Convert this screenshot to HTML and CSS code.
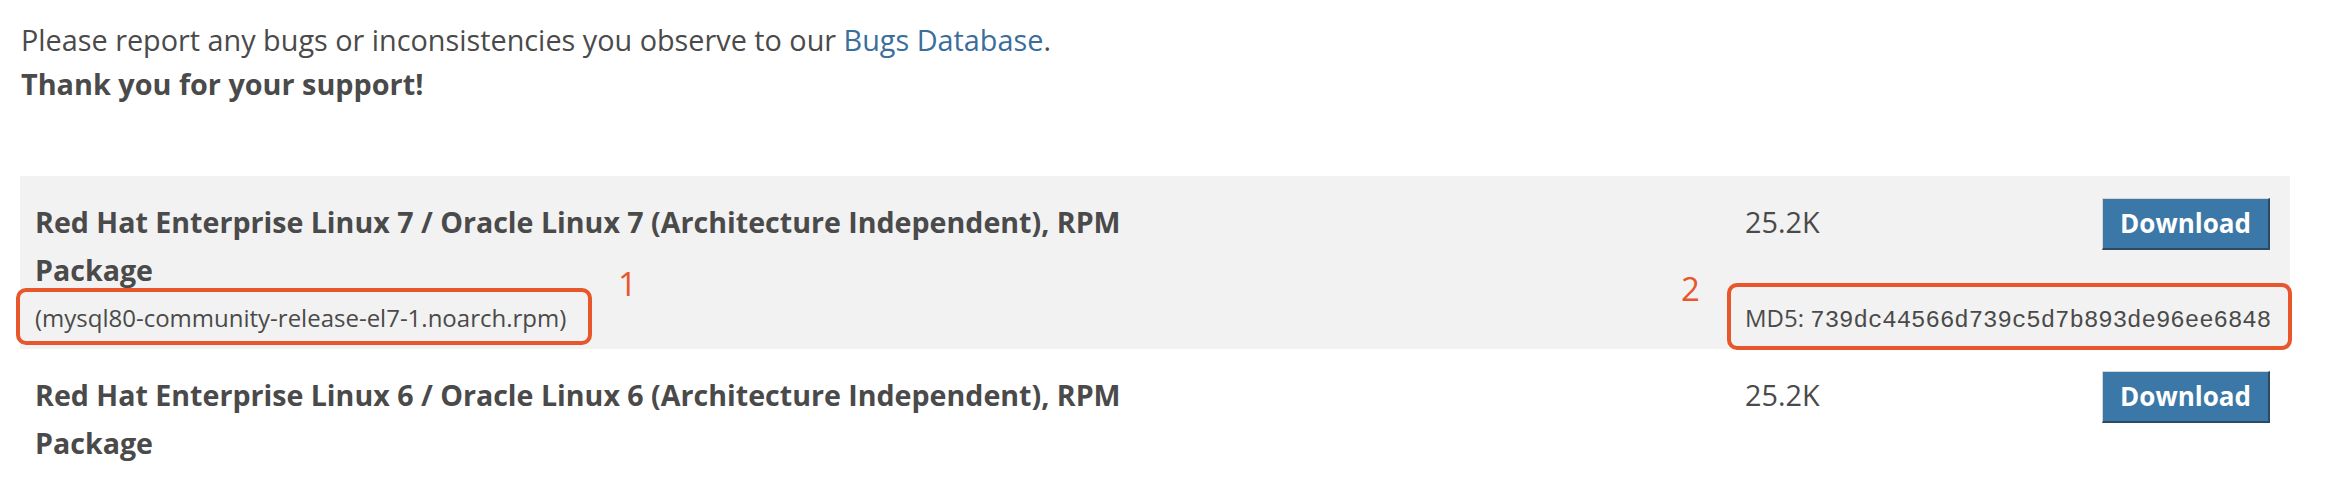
FILE: index.html
```html
<!DOCTYPE html>
<html lang="en">
<head>
<meta charset="utf-8">
<title>Downloads</title>
<link rel="stylesheet" href="styles.css">
</head>
<body>
<div class="page">
  <p class="intro">Please report any bugs or inconsistencies you observe to our <a href="#" class="link">Bugs Database</a>.<br><strong>Thank you for your support!</strong></p>

  <div class="downloads">
    <div class="row alt">
      <div class="title">Red Hat Enterprise Linux 7 / Oracle Linux 7 (Architecture Independent), RPM Package</div>
      <div class="size">25.2K</div>
      <div class="action"><a href="#" class="btn">Download</a></div>
      <div class="file">(mysql80-community-release-el7-1.noarch.rpm)</div>
      <div class="md5">MD5: <code class="hash">739dc44566d739c5d7b893de96ee6848</code></div>
      <span class="mark mark-file"></span>
      <span class="mark-label label-file">1</span>
      <span class="mark mark-md5"></span>
      <span class="mark-label label-md5">2</span>
    </div>
    <div class="row">
      <div class="title">Red Hat Enterprise Linux 6 / Oracle Linux 6 (Architecture Independent), RPM Package</div>
      <div class="size">25.2K</div>
      <div class="action"><a href="#" class="btn">Download</a></div>
      <div class="file">(mysql80-community-release-el6-1.noarch.rpm)</div>
      <div class="md5">MD5: <code class="hash">4d6e9ba3d8f9d0e4c3a1b2f5e6d7c8b9</code></div>
    </div>
  </div>
</div>
</body>
</html>
```

FILE: styles.css
```css
html, body {
  margin: 0;
  padding: 0;
  background: #ffffff;
}

body {
  font-family: "Open Sans", "Liberation Sans", sans-serif;
  color: #4a4a4a;
}

.page {
  width: 2350px;
}

.intro {
  margin: 18px 0 0 21px;
  font-size: 28.8px;
  line-height: 44px;
}

.intro strong {
  font-weight: 700;
}

.link {
  color: #3a6e9b;
  text-decoration: none;
}

.downloads {
  margin: 70px 0 0 20px;
  width: 2270px;
}

.row {
  position: relative;
  display: grid;
  grid-template-columns: 1710px 1fr auto;
  padding: 22px 20px 4px 15px;
}

.row.alt {
  background: #f2f2f2;
}

.title {
  grid-column: 1;
  grid-row: 1;
  max-width: 1150px;
  font-size: 28.6px;
  font-weight: 700;
  line-height: 48px;
}

.size {
  grid-column: 2;
  grid-row: 1;
  font-size: 28.8px;
  line-height: 48px;
}

.action {
  grid-column: 3;
  grid-row: 1;
}

.btn {
  display: inline-block;
  box-sizing: border-box;
  height: 52px;
  padding: 0 17px;
  background: #3b78a8;
  color: #ffffff;
  font-size: 26px;
  font-weight: 700;
  line-height: 48px;
  text-decoration: none;
  border-style: solid;
  border-width: 1px 2px 2px 1px;
  border-color: #d6d6d6 #2c4a62 #2c4a62 #d6d6d6;
}

.file {
  grid-column: 1;
  grid-row: 2;
  font-size: 24px;
  line-height: 48px;
}

.md5 {
  grid-column: 2 / 4;
  grid-row: 2;
  font-size: 24px;
  line-height: 48px;
  white-space: nowrap;
}

.hash {
  font-family: "Liberation Mono", "DejaVu Sans Mono", monospace;
  font-size: 24px;
}

.mark {
  position: absolute;
  box-sizing: border-box;
  border: 4px solid #e8562c;
  border-radius: 10px;
}

.mark-file {
  left: -4px;
  top: 112px;
  width: 576px;
  height: 57px;
}

.mark-md5 {
  left: 1707px;
  top: 107px;
  width: 565px;
  height: 67px;
}

.mark-label {
  position: absolute;
  font-size: 33px;
  line-height: 33px;
  color: #e8562c;
}

.label-file {
  left: 598px;
  top: 91px;
}

.label-md5 {
  left: 1661px;
  top: 96px;
}
```
